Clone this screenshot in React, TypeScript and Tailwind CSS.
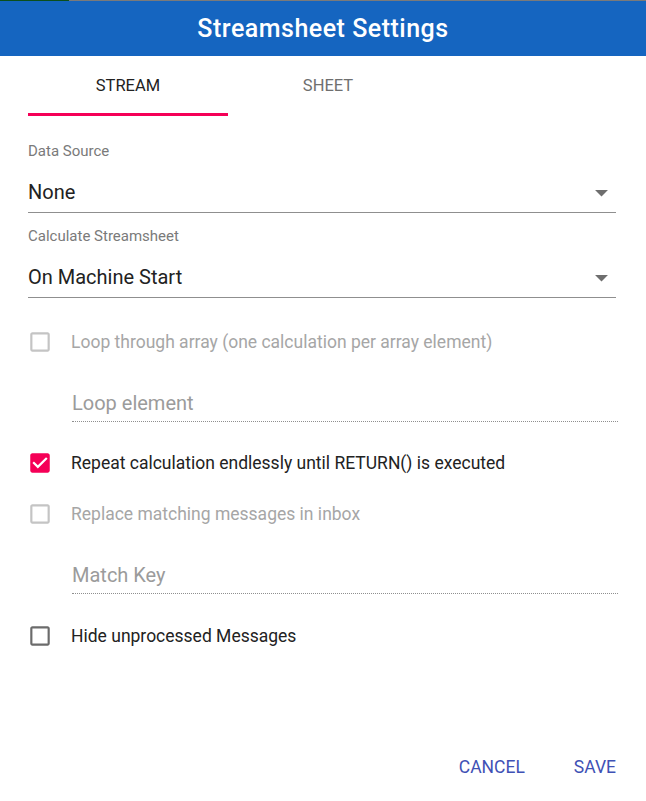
import { useState } from 'react'

const BOX_BLANK =
  'M19 5v14H5V5h14m0-2H5c-1.11 0-2 .9-2 2v14c0 1.1.89 2 2 2h14c1.1 0 2-.9 2-2V5c0-1.1-.9-2-2-2z'
const BOX_CHECKED =
  'M19 3H5c-1.11 0-2 .9-2 2v14c0 1.1.89 2 2 2h14c1.1 0 2-.9 2-2V5c0-1.1-.9-2-2-2zm-9 14l-5-5 1.41-1.41L10 14.17l7.59-7.59L19 8l-9 9z'

interface CheckRowProps {
  label: string
  checked?: boolean
  disabled?: boolean
  className?: string
  onToggle?: () => void
}

function CheckRow({ label, checked = false, disabled = false, className = '', onToggle }: CheckRowProps) {
  const iconColor = disabled ? 'text-[#c4c4c4]' : checked ? 'text-[#f50057]' : 'text-[#6b6b6b]'
  return (
    <label
      className={`flex h-[40px] items-center ${disabled ? 'cursor-default' : 'cursor-pointer'} ${className}`}
      onClick={() => !disabled && onToggle?.()}
    >
      <svg viewBox="0 0 24 24" className={`ml-[-1px] h-[26px] w-[26px] fill-current ${iconColor}`}>
        <path d={checked ? BOX_CHECKED : BOX_BLANK} />
      </svg>
      <span
        className={`ml-[18px] text-[17.5px] leading-[24px] ${disabled ? 'text-[#a6a6a6]' : 'text-[#222]'}`}
      >
        {label}
      </span>
    </label>
  )
}

function SelectField({ label, value, className = '' }: { label: string; value: string; className?: string }) {
  return (
    <div className={className}>
      <div className="text-[15px] leading-[18px] text-[#7a7a7a]">{label}</div>
      <div className="mt-[12px] flex h-[41px] items-center justify-between border-b border-[#8f8f8f]">
        <span className="text-[20px] leading-[24px] text-[#222]">{value}</span>
        <svg viewBox="0 0 24 24" className="mr-[-1px] h-[31px] w-[31px] fill-[#6e6e6e]">
          <path d="M7 10l5 5 5-5z" />
        </svg>
      </div>
    </div>
  )
}

function DisabledInput({ placeholder, className = '' }: { placeholder: string; className?: string }) {
  return (
    <div
      className={`ml-[44px] mr-[-2px] flex h-[37px] items-center border-b border-dotted border-[#8f8f8f] ${className}`}
    >
      <span className="text-[20px] leading-[24px] text-[#9b9b9b]">{placeholder}</span>
    </div>
  )
}

export default function App() {
  const [tab, setTab] = useState<'stream' | 'sheet'>('stream')
  const [repeat, setRepeat] = useState(true)
  const [hide, setHide] = useState(false)

  return (
    <div className="flex h-[801px] w-[646px] flex-col bg-white font-['Roboto',sans-serif]">
      <div className="flex h-[1px]">
        <div className="w-[69px] bg-[#0b4f1c]" />
        <div className="flex-1 bg-[#7a7a7a]" />
      </div>
      <header className="flex h-[55px] items-center justify-center bg-[#1565c0]">
        <h1 className="text-[25px] font-medium leading-[30px] tracking-[0.5px] text-white">
          Streamsheet Settings
        </h1>
      </header>

      <nav className="flex px-[28px]">
        {(['stream', 'sheet'] as const).map((t) => (
          <button
            key={t}
            type="button"
            onClick={() => setTab(t)}
            className="relative flex h-[60px] w-[200px] items-center justify-center pt-[1px]"
          >
            <span className={`text-[16.5px] uppercase ${tab === t ? 'text-[#222]' : 'text-[#6f6f6f]'}`}>
              {t}
            </span>
            {tab === t && <span className="absolute inset-x-0 bottom-0 h-[3px] bg-[#f50057]" />}
          </button>
        ))}
      </nav>

      <div className="flex flex-col pl-[28px] pr-[30px]">
        <SelectField label="Data Source" value="None" className="mt-[26px]" />
        <SelectField label="Calculate Streamsheet" value="On Machine Start" className="mt-[14px]" />

        <CheckRow label="Loop through array (one calculation per array element)" disabled className="mt-[24px]" />
        <DisabledInput placeholder="Loop element" className="mt-[23px]" />

        <CheckRow
          label="Repeat calculation endlessly until RETURN() is executed"
          checked={repeat}
          onToggle={() => setRepeat((v) => !v)}
          className="mt-[21px]"
        />
        <CheckRow label="Replace matching messages in inbox" disabled className="mt-[11px]" />
        <DisabledInput placeholder="Match Key" className="mt-[23px]" />

        <CheckRow
          label="Hide unprocessed Messages"
          checked={hide}
          onToggle={() => setHide((v) => !v)}
          className="mt-[22px]"
        />
      </div>

      <div className="mt-auto mb-[11px] flex h-[45px] items-center justify-end gap-[29px] pr-[20px]">
        <button type="button" className="px-[10px] text-[17.5px] uppercase text-[#3f51b5]">
          Cancel
        </button>
        <button type="button" className="px-[10px] text-[17.5px] uppercase text-[#3f51b5]">
          Save
        </button>
      </div>
    </div>
  )
}
